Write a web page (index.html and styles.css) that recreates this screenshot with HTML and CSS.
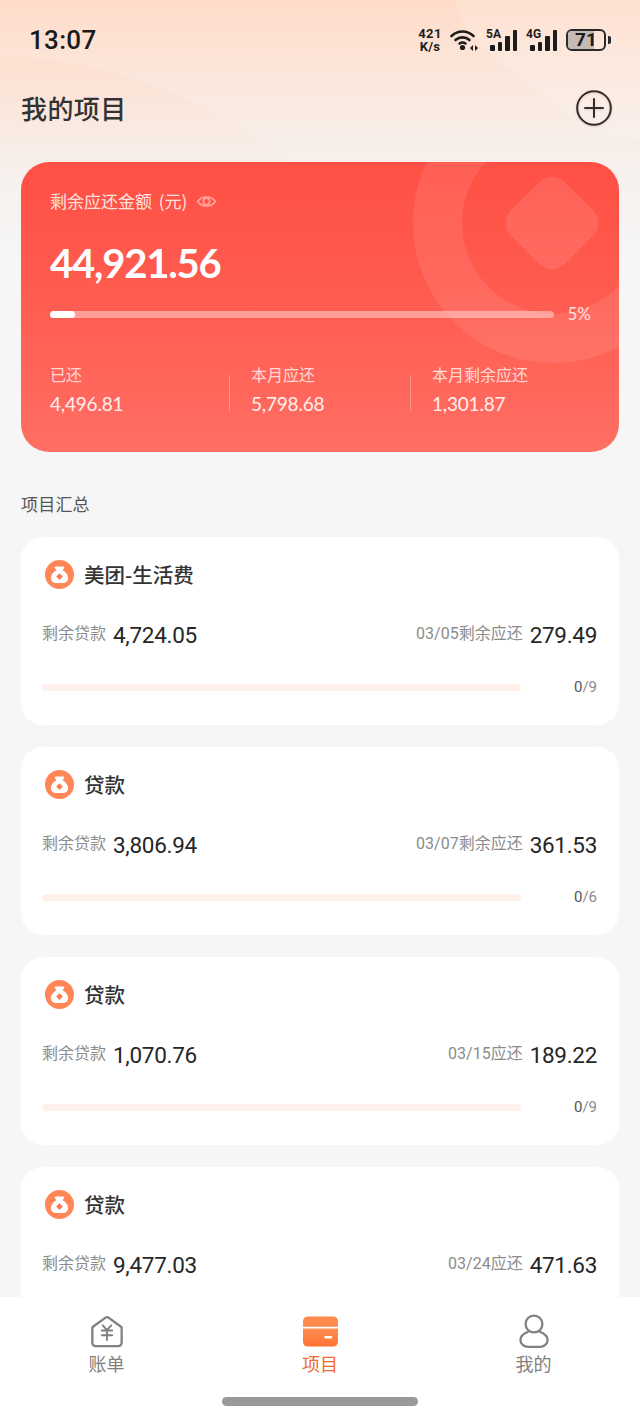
FILE: index.html
```html
<!DOCTYPE html>
<html lang="zh">
<head>
    <meta charset="UTF-8">
    <meta name="viewport" content="width=device-width, initial-scale=1.0">
    <title>我的项目</title>
    <link rel="stylesheet" href="styles.css">
</head>
<body>
<div class="phone">
    <svg class="top-bg" width="640" height="260" viewBox="0 0 640 260">
        <defs>
            <linearGradient id="sky" x1="0" y1="0" x2="0" y2="1">
                <stop offset="0" stop-color="#fedcc9"/>
                <stop offset=".25" stop-color="#fce5d9"/>
                <stop offset=".5" stop-color="#f8ede7"/>
                <stop offset=".68" stop-color="#f6f1ee"/>
                <stop offset="1" stop-color="#f6f6f6"/>
            </linearGradient>
            <linearGradient id="wave" x1="0" y1="0" x2="0" y2="1">
                <stop offset="0" stop-color="#ffd9c6" stop-opacity=".35"/>
                <stop offset="1" stop-color="#ffd9c6" stop-opacity="0"/>
            </linearGradient>
        </defs>
        <rect width="640" height="260" fill="url(#sky)"/>
        <path d="M0 58C100 55 220 100 310 178H0z" fill="url(#wave)"/>
        <path d="M455 0C465 50 520 70 560 110 590 135 620 140 640 140V0z" fill="#fff" opacity=".15"/>
    </svg>

    <div class="status">
        <span class="time">13:07</span>
        <div class="status-icons">
            <div class="speed"><span>421</span><span>K/s</span></div>
            <svg width="28" height="22" viewBox="0 0 28 22"><g fill="none" stroke="#1c1c1c" stroke-width="2.600" stroke-linecap="round"><path d="M1.500 7C8 1 17 1 23.500 7"/><path d="M5.500 11C9.500 7.500 15.500 7.500 19.500 11"/><path d="M9.500 14.500C11.300 13.300 13.700 13.300 15.500 14.500"/></g><circle cx="12.500" cy="18.500" r="2.600" fill="#1c1c1c"/><path d="M20 19l3-3v6zM28 19l-3-3v6z" fill="#1c1c1c"/></svg>
            <div class="signal"><span class="net">5A</span><i class="b1"></i><i class="b2"></i><i class="b3"></i><i class="b4"></i></div>
            <div class="signal"><span class="net">4G</span><i class="b1"></i><i class="b2"></i><i class="b3"></i><i class="b4"></i></div>
            <div class="battery"><div class="battery-body"><div class="battery-fill"></div><span>71</span></div><div class="battery-cap"></div></div>
        </div>
    </div>

    <header class="head">
        <h1>我的项目</h1>
        <svg class="add" width="36" height="36" viewBox="0 0 36 36"><circle cx="18" cy="18" r="16.800" fill="none" stroke="#3a2a2a" stroke-width="2"/><path d="M18 9v18M9 18h18" stroke="#3a2a2a" stroke-width="2" stroke-linecap="round"/></svg>
    </header>

    <section class="summary">
        <div class="ring"></div>
        <div class="diamond"></div>
        <div class="summary-title">剩余应还金额 (元)
            <svg width="21" height="15" viewBox="0 0 22 16"><path d="M1.500 8C6 1.500 16 1.500 20.500 8 16 14.500 6 14.500 1.500 8z" fill="none" stroke="#ffa9a0" stroke-width="1.700"/><circle cx="11" cy="8" r="3.400" fill="none" stroke="#ffa9a0" stroke-width="1.700"/></svg>
        </div>
        <div class="summary-amount">44,921.56</div>
        <div class="summary-progress">
            <div class="track"><div class="track-fill"></div></div>
            <span>5%</span>
        </div>
        <div class="stats">
            <div class="stat stat-first"><label>已还</label><b>4,496.81</b></div>
            <i class="divider"></i>
            <div class="stat"><label>本月应还</label><b>5,798.68</b></div>
            <i class="divider"></i>
            <div class="stat"><label>本月剩余应还</label><b>1,301.87</b></div>
        </div>
    </section>

    <h2 class="section-title">项目汇总</h2>

    <section class="item">
        <div class="item-head">
            <svg class="bag" width="29" height="29" viewBox="0 0 28 28"><use href="#bag-icon"/></svg>
            <span>美团-生活费</span>
        </div>
        <div class="item-row">
            <div class="pair"><label>剩余贷款</label><b>4,724.05</b></div>
            <div class="pair"><label>03/05剩余应还</label><b>279.49</b></div>
        </div>
        <div class="item-progress"><div class="bar"></div><span><em>0</em>/9</span></div>
    </section>

    <section class="item">
        <div class="item-head">
            <svg class="bag" width="29" height="29" viewBox="0 0 28 28"><use href="#bag-icon"/></svg>
            <span>贷款</span>
        </div>
        <div class="item-row">
            <div class="pair"><label>剩余贷款</label><b>3,806.94</b></div>
            <div class="pair"><label>03/07剩余应还</label><b>361.53</b></div>
        </div>
        <div class="item-progress"><div class="bar"></div><span><em>0</em>/6</span></div>
    </section>

    <section class="item">
        <div class="item-head">
            <svg class="bag" width="29" height="29" viewBox="0 0 28 28"><use href="#bag-icon"/></svg>
            <span>贷款</span>
        </div>
        <div class="item-row">
            <div class="pair"><label>剩余贷款</label><b>1,070.76</b></div>
            <div class="pair"><label>03/15应还</label><b>189.22</b></div>
        </div>
        <div class="item-progress"><div class="bar"></div><span><em>0</em>/9</span></div>
    </section>

    <section class="item">
        <div class="item-head">
            <svg class="bag" width="29" height="29" viewBox="0 0 28 28"><use href="#bag-icon"/></svg>
            <span>贷款</span>
        </div>
        <div class="item-row">
            <div class="pair"><label>剩余贷款</label><b>9,477.03</b></div>
            <div class="pair"><label>03/24应还</label><b>471.63</b></div>
        </div>
        <div class="item-progress"><div class="bar"></div><span><em>0</em>/9</span></div>
    </section>

    <nav class="tabs">
        <div class="tab">
            <svg width="34" height="33" viewBox="0 0 36 34"><path d="M2.500 12.500 16 2.500a3.500 3.500 0 0 1 4 0l13.500 10V29a3.500 3.500 0 0 1-3.500 3.500H6A3.500 3.500 0 0 1 2.500 29z" fill="none" stroke="#808080" stroke-width="2.400" stroke-linejoin="round"/><path d="M13.500 10.500l4.500 5 4.500-5M12.500 16h11M12.500 21h11M18 15.500V26" fill="none" stroke="#808080" stroke-width="2" stroke-linecap="round"/></svg>
            <span>账单</span>
        </div>
        <div class="tab active">
            <svg width="35" height="30" viewBox="0 0 36 31"><defs><linearGradient id="wallet" x1="0" y1="0" x2="0" y2="1"><stop offset="0" stop-color="#ff8f52"/><stop offset="1" stop-color="#ff7232"/></linearGradient></defs><path d="M0 10.500V5a5 5 0 0 1 5-5h26a5 5 0 0 1 5 5v5.500z" fill="#ff8a4e"/><path d="M0 12.500h36V26a5 5 0 0 1-5 5H5a5 5 0 0 1-5-5z" fill="url(#wallet)"/><rect x="22" y="20" width="8" height="2.600" rx="1" fill="#fff"/></svg>
            <span>项目</span>
        </div>
        <div class="tab">
            <svg class="person" width="30" height="36" viewBox="0 0 32 37"><circle cx="16" cy="11" r="9" fill="none" stroke="#808080" stroke-width="2.400"/><path d="M10.500 19C5 21 1.500 24.500 1.500 28 1.500 32 5 35.500 10 35.500h12c5 0 8.500-3.500 8.500-7.500 0-3.500-3.500-7-9-9" fill="none" stroke="#808080" stroke-width="2.400"/></svg>
            <span>我的</span>
        </div>
        <div class="home-bar"></div>
    </nav>

    <svg class="defs" width="0" height="0"><defs><g id="bag-icon"><circle cx="14" cy="14" r="14" fill="#ff8657"/><path d="M10.500 6.200h7c.9 0 1.300 1 .8 1.700l-1.300 2c3.200 1.600 5.300 4.600 5.300 7.500 0 3-2.300 4.900-5 4.900h-6.600c-2.700 0-5-1.900-5-4.900 0-2.900 2.100-5.900 5.300-7.500l-1.300-2c-.5-.7-.1-1.700.8-1.700z" fill="#fff"/><path d="M14 12.800l3.200 3.200-3.200 3.200-3.200-3.200z" fill="#ff7a4c"/></g></defs></svg>
</div>
</body>
</html>
```

FILE: styles.css
```css
* {
    box-sizing: border-box;
}
body {
    margin: 0;
    background: #f6f6f6;
    font-family: "Noto Sans CJK SC", "Noto Sans", sans-serif;
    color: #222;
}
.phone {
    position: relative;
    width: 640px;
    height: 1416px;
    overflow: hidden;
    padding: 0 21px;
    background: #f6f6f6;
}
.top-bg {
    position: absolute;
    left: 0;
    top: 0;
}
.status, .head, .summary, .section-title, .item {
    position: relative;
}
.status {
    height: 78px;
    margin: 0 8px;
    padding-top: 1px;
    display: flex;
    justify-content: space-between;
    align-items: center;
}
.time {
    font-family: "Roboto", sans-serif;
    font-size: 26px;
    font-weight: 500;
    color: #1a1a1a;
    letter-spacing: .3px;
}
.status-icons {
    display: flex;
    align-items: center;
    gap: 8px;
}
.speed {
    display: flex;
    flex-direction: column;
    width: 24px;
    font-family: "Roboto", sans-serif;
    font-size: 13px;
    line-height: 13px;
    font-weight: 700;
    letter-spacing: .3px;
    text-align: center;
    color: #1c1c1c;
}
.signal {
    position: relative;
    width: 32px;
    height: 22px;
}
.signal i {
    position: absolute;
    bottom: 0;
    width: 4.500px;
    background: #1c1c1c;
    border-radius: 1px;
}
.signal .b1 { left: 4px; height: 6px; }
.signal .b2 { left: 11.500px; height: 9px; }
.signal .b3 { left: 19px; height: 15px; }
.signal .b4 { left: 26.500px; height: 21px; }
.net {
    position: absolute;
    left: 0;
    top: -1px;
    font-family: "Roboto", sans-serif;
    font-size: 12px;
    line-height: 12px;
    font-weight: 700;
    color: #1c1c1c;
}
.battery {
    display: flex;
    align-items: center;
    gap: 2px;
}
.battery-body {
    position: relative;
    width: 40px;
    height: 22px;
    border: 2px solid #2a2a2a;
    border-radius: 6px;
    text-align: center;
    overflow: hidden;
}
.battery-body span {
    position: relative;
    font-family: "Roboto", sans-serif;
    font-size: 19px;
    line-height: 18px;
    font-weight: 700;
    color: #1c1c1c;
    display: block;
}
.battery-fill {
    position: absolute;
    left: 0;
    top: 0;
    bottom: 0;
    width: 71%;
    background: #c4bab4;
}
.battery-cap {
    width: 3px;
    height: 8px;
    background: #2a2a2a;
    border-radius: 0 2px 2px 0;
}
.head {
    height: 84px;
    display: flex;
    justify-content: space-between;
    align-items: flex-start;
    padding-top: 12px;
}
.head h1 {
    margin: 0;
    font-size: 26px;
    line-height: 36px;
    font-weight: 500;
    letter-spacing: .4px;
    color: #333;
}
.add {
    margin: 0 7px 0 0;
    filter: drop-shadow(0 1px 1px rgba(0, 0, 0, .12));
}
.summary {
    height: 290px;
    border-radius: 28px;
    padding: 26px 28px 0 29px;
    overflow: hidden;
    color: #fff;
    background: linear-gradient(180deg, #ff5045 0%, #ff5a4e 40%, #ff6e64 100%);
}
.ring {
    position: absolute;
    left: 392px;
    top: -79px;
    width: 280px;
    height: 280px;
    border-radius: 50%;
    border: 49px solid rgba(255, 255, 255, .09);
}
.diamond {
    position: absolute;
    left: 493px;
    top: 23px;
    width: 76px;
    height: 76px;
    border-radius: 18px;
    transform: rotate(45deg);
    background: rgba(255, 255, 255, .1);
}
.summary-title {
    position: relative;
    display: flex;
    align-items: center;
    gap: 9px;
    font-size: 17px;
    line-height: 26px;
    word-spacing: 3px;
    color: #ffe3df;
}
.summary-amount {
    position: relative;
    margin-top: 23px;
    font-family: "Lato", sans-serif;
    font-size: 40px;
    line-height: 52px;
    font-weight: 700;
    letter-spacing: -1.200px;
}
.summary-progress {
    position: relative;
    margin-top: 13px;
    display: flex;
    align-items: center;
    justify-content: space-between;
    font-family: "Lato", sans-serif;
    font-size: 17px;
    line-height: 24px;
    color: #ffe3df;
}
.track {
    width: 504px;
    height: 7px;
    border-radius: 4px;
    background: rgba(255, 255, 255, .4);
}
.track-fill {
    width: 25px;
    height: 7px;
    border-radius: 4px;
    background: #fff;
}
.stats {
    position: relative;
    margin-top: 37px;
    display: flex;
    align-items: center;
}
.stat {
    width: 180px;
    padding-left: 21px;
    display: flex;
    flex-direction: column;
}
.stat-first {
    width: 179px;
    padding-left: 0;
}
.divider {
    width: 1px;
    height: 36px;
    margin-top: 3px;
    background: rgba(255, 255, 255, .3);
}
.stat label {
    font-size: 16px;
    line-height: 22px;
    color: #ffd9d4;
}
.stat b {
    margin-top: 4px;
    font-family: "Lato", sans-serif;
    font-size: 19px;
    line-height: 30px;
    font-weight: 400;
    letter-spacing: -.2px;
    color: #fff0ee;
}
.section-title {
    margin: 40px 0 21px;
    font-size: 17px;
    line-height: 24px;
    font-weight: 400;
    letter-spacing: .2px;
    color: #555;
}
.item {
    height: 188px;
    margin-bottom: 22px;
    padding: 22px 22px 0 21px;
    border-radius: 22px;
    background: #fff;
}
.item-head {
    display: flex;
    align-items: center;
    gap: 10px;
    margin-left: 3px;
    height: 30px;
    font-size: 20.500px;
    line-height: 30px;
    font-weight: 500;
    color: #333;
}
.item-row {
    margin-top: 30px;
    display: flex;
    justify-content: space-between;
    align-items: center;
}
.pair {
    display: flex;
    align-items: center;
    gap: 7px;
}
.pair label {
    font-family: "Roboto", "Noto Sans CJK SC", sans-serif;
    font-size: 16px;
    line-height: 24px;
    margin-top: -2px;
    color: #8c8c8c;
}
.pair b {
    font-family: "Roboto", sans-serif;
    font-size: 22.500px;
    line-height: 32px;
    font-weight: 400;
    letter-spacing: -.3px;
    color: #262626;
}
.item-progress {
    margin-top: 24px;
    display: flex;
    align-items: center;
    justify-content: space-between;
}
.bar {
    width: 479px;
    height: 7px;
    border-radius: 4px;
    background: #fff0e9;
}
.item-progress span {
    font-family: "Roboto", sans-serif;
    font-size: 15px;
    line-height: 24px;
    color: #8c8c8c;
}
.item-progress em {
    font-style: normal;
    color: #555;
}
.tabs {
    position: absolute;
    left: 0;
    right: 0;
    bottom: 0;
    height: 119px;
    display: flex;
    justify-content: space-between;
    padding: 18px 0 0;
    background: #fff;
}
.tab {
    width: 213px;
    display: flex;
    flex-direction: column;
    align-items: center;
    font-size: 18px;
    line-height: 24px;
    color: #808080;
}
.tab svg {
    height: 33px;
    margin-bottom: 3px;
}
.tab svg.person {
    height: 36px;
    margin: -2px 0 2px;
}
.tab.active {
    color: #f0692e;
}
.home-bar {
    position: absolute;
    left: 222px;
    bottom: 10px;
    width: 196px;
    height: 9px;
    border-radius: 5px;
    background: #999;
}
.defs {
    position: absolute;
}
```
